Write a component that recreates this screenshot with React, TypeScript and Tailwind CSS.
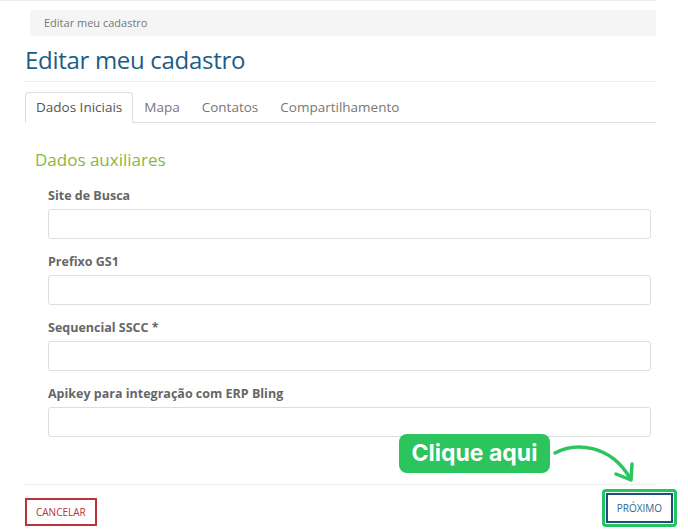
import React from "react";

const fields = [
  "Site de Busca",
  "Prefixo GS1",
  "Sequencial SSCC *",
  "Apikey para integração com ERP Bling",
];

const tabs = ["Dados Iniciais", "Mapa", "Contatos", "Compartilhamento"];

export default function App() {
  return (
    <div
      className="relative w-[688px] h-[531px] bg-white overflow-hidden"
      style={{ fontFamily: '"Open Sans", "Noto Sans", sans-serif' }}
    >
      <div className="w-[656px] border-t border-[#eeeeee]" />

      <div className="ml-[25px] w-[631px]">
        {/* Breadcrumb */}
        <div className="ml-[5px] mt-[9px] h-[26px] rounded-[3px] bg-[#f5f5f5] pl-[14px] flex items-center text-[11px] text-[#777777]">
          Editar meu cadastro
        </div>

        {/* Title */}
        <h1 className="mt-[9px] text-[24px] leading-[30px] text-[#1c5d88] tracking-[-0.3px]">
          Editar meu cadastro
        </h1>
        <div className="mt-[6px] border-t border-[#eeeeee]" />

        {/* Tabs */}
        <div className="mt-[10px] flex border-b border-[#dddddd] h-[31px]">
          {tabs.map((t, i) => (
            <div
              key={t}
              className={
                i === 0
                  ? "px-[10px] -mb-px h-[31px] flex items-center rounded-t-[4px] border border-[#dddddd] border-b-white bg-white text-[13.5px] text-[#555555]"
                  : "px-[11px] h-[30px] flex items-center text-[13.5px] text-[#777777]"
              }
            >
              {t}
            </div>
          ))}
        </div>

        {/* Section */}
        <div className="pl-[10px] pr-[5px]">
          <h2 className="mt-[26px] text-[17px] leading-[22px] text-[#8ab740]">
            Dados auxiliares
          </h2>
          <div className="pl-[13px] mt-[16px] flex flex-col gap-[14px]">
            {fields.map((f) => (
              <div key={f} className="flex flex-col">
                <label className="text-[12.5px] leading-[18px] font-bold text-[#666666]">
                  {f}
                </label>
                <input
                  type="text"
                  className="mt-[4px] h-[30px] w-full rounded-[3px] border border-[#dddddd] bg-white outline-none"
                />
              </div>
            ))}
          </div>
        </div>

        <div className="mt-[47px] border-t border-[#eeeeee]" />
      </div>

      {/* Footer buttons */}
      <div className="ml-[25px] w-[652px] mt-[4px] flex items-end justify-between">
        <button className="mb-[1px] h-[28px] px-[9px] border-2 border-[#b5353a] text-[10px] text-[#b5353a] bg-white">
          CANCELAR
        </button>
        <div className="rounded-[4px] border-[3px] border-[#22c55e] p-[1px]">
          <button className="h-[30px] px-[9px] border-2 border-[#1c4f7a] text-[10px] text-[#2c6a94] bg-white">
            PRÓXIMO
          </button>
        </div>
      </div>

      {/* Annotation */}
      <div
        className="absolute left-[399px] top-[434px] w-[151px] h-[39px] rounded-[8px] bg-[#2bc45d] flex items-center justify-center text-white text-[23px] font-bold"
        style={{ fontFamily: 'Inter, "Open Sans", sans-serif' }}
      >
        Clique aqui
      </div>
      <svg
        className="absolute left-[550px] top-[440px]"
        width="90"
        height="50"
        viewBox="0 0 90 50"
        fill="none"
      >
        <path
          d="M5 13 C 25 2, 60 4, 80 38"
          stroke="#2bc45d"
          strokeWidth="3.5"
          strokeLinecap="round"
        />
        <path
          d="M66 34 L 81 40 L 82 24"
          stroke="#2bc45d"
          strokeWidth="3.5"
          strokeLinecap="round"
          strokeLinejoin="round"
        />
      </svg>
    </div>
  );
}
